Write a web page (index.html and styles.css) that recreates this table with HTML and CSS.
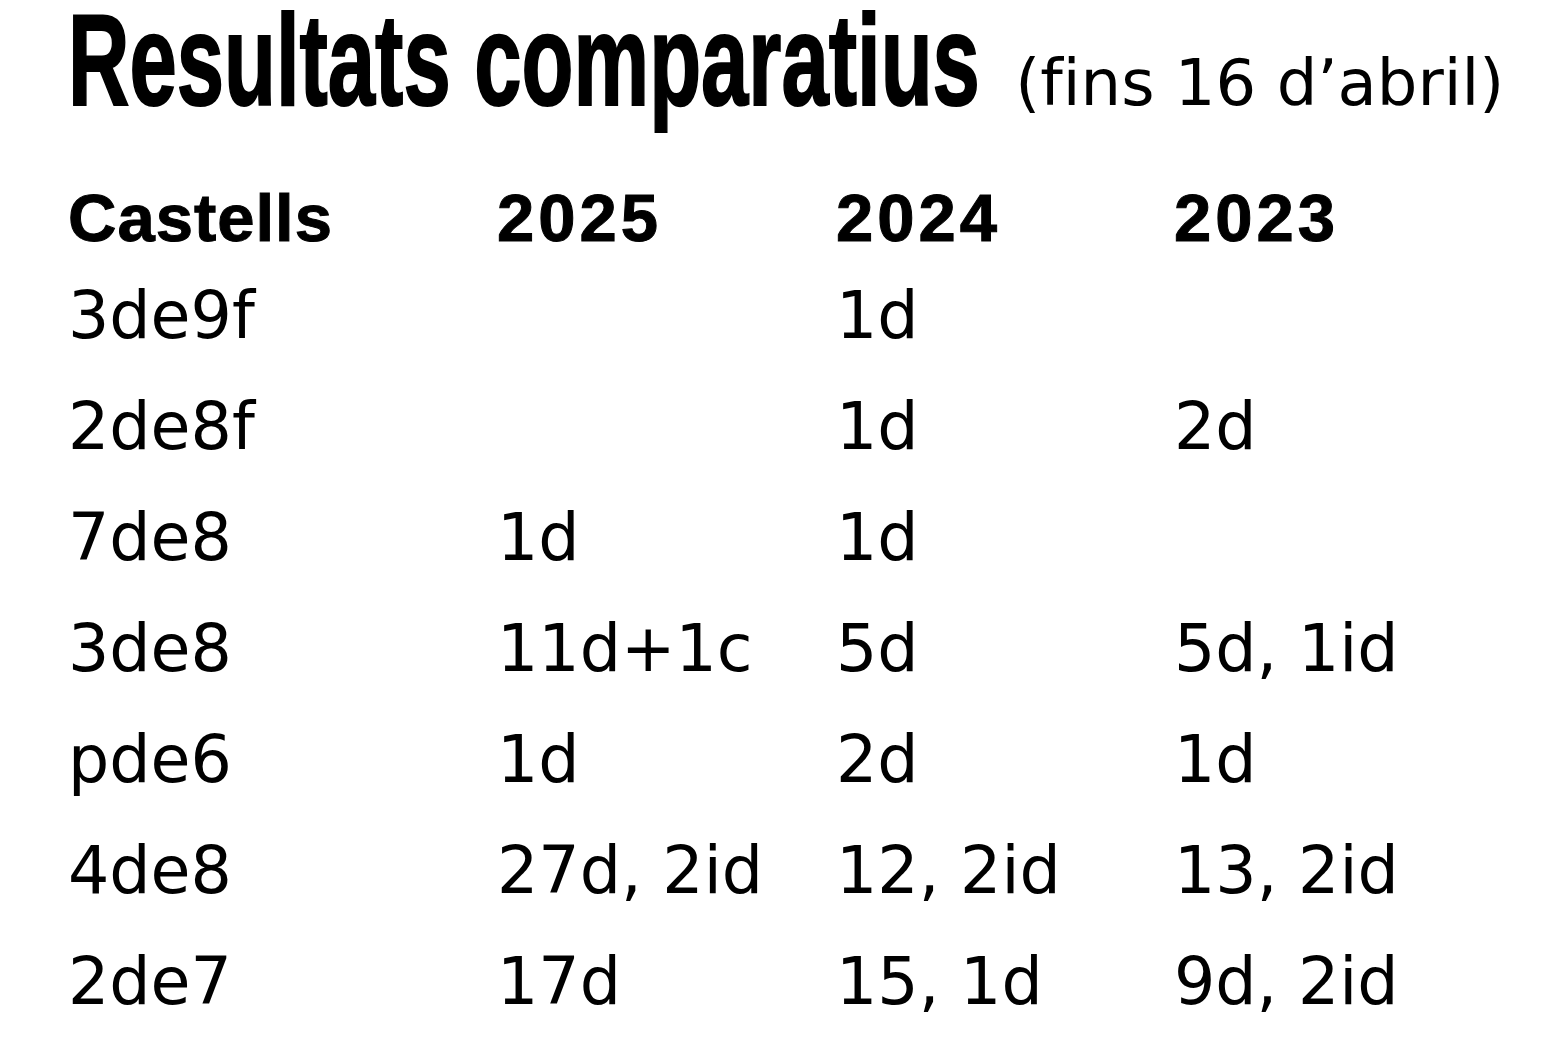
FILE: index.html
```html
<!DOCTYPE html>
<html lang="ca">
<head>
<meta charset="utf-8">
<title>Resultats comparatius</title>
<link rel="stylesheet" href="styles.css">
</head>
<body>
<main class="page">
  <h1 class="title">
    <span class="title-main">Resultats comparatius</span>
    <span class="title-sub">(fins 16 d’abril)</span>
  </h1>
  <div class="table">
    <div class="cell head">Castells</div>
    <div class="cell head year">2025</div>
    <div class="cell head year">2024</div>
    <div class="cell head year">2023</div>

    <div class="cell">3de9f</div><div class="cell"></div><div class="cell">1d</div><div class="cell"></div>
    <div class="cell">2de8f</div><div class="cell"></div><div class="cell">1d</div><div class="cell">2d</div>
    <div class="cell">7de8</div><div class="cell">1d</div><div class="cell">1d</div><div class="cell"></div>
    <div class="cell">3de8</div><div class="cell">11d+1c</div><div class="cell">5d</div><div class="cell">5d, 1id</div>
    <div class="cell">pde6</div><div class="cell">1d</div><div class="cell">2d</div><div class="cell">1d</div>
    <div class="cell">4de8</div><div class="cell">27d, 2id</div><div class="cell">12, 2id</div><div class="cell">13, 2id</div>
    <div class="cell">2de7</div><div class="cell">17d</div><div class="cell">15, 1d</div><div class="cell">9d, 2id</div>
  </div>
</main>
</body>
</html>
```

FILE: styles.css
```css
html, body {
  margin: 0;
  padding: 0;
  background: #ffffff;
}

body {
  color: #000000;
  font-family: "Liberation Sans", Arial, sans-serif;
}

.page {
  padding-left: 68px;
  width: 1490px;
  height: 1047px;
  overflow: hidden;
}

.title {
  margin: 0 0 32px 0;
  display: flex;
  align-items: baseline;
  white-space: nowrap;
  font-weight: normal;
  line-height: 120px;
}

.title-main {
  display: inline-block;
  font-size: 130px;
  font-weight: bold;
  line-height: 120px;
  transform: scaleX(0.654);
  transform-origin: left center;
  margin-right: -447px;
  -webkit-text-stroke: 2px #000;
}

.title-sub {
  font-family: "DejaVu Sans", sans-serif;
  font-size: 64px;
  letter-spacing: 0;
}

.table {
  display: grid;
  grid-template-columns: 429px 339px 338px 1fr;
}

.cell {
  font-family: "DejaVu Sans", sans-serif;
  font-size: 65px;
  line-height: 111px;
  white-space: nowrap;
}

.head {
  font-family: "Liberation Sans", Arial, sans-serif;
  font-size: 67px;
  font-weight: bold;
  line-height: 85px;
  letter-spacing: 1px;
  -webkit-text-stroke: 1px #000;
}

.head.year {
  letter-spacing: 4px;
}
```
